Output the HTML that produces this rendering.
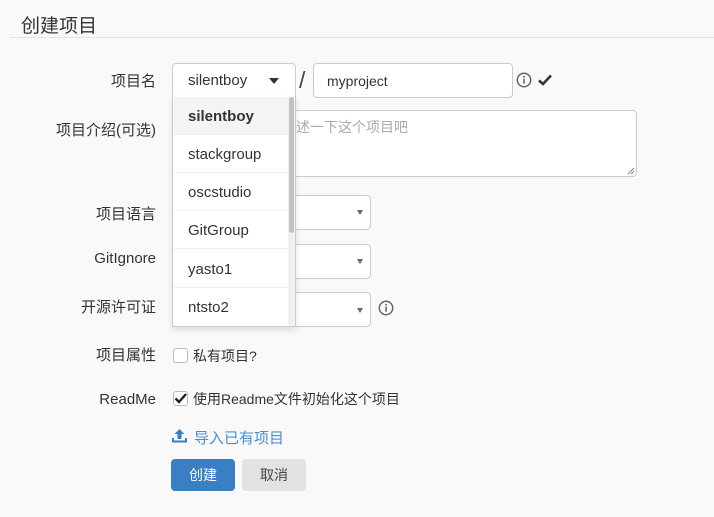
<!DOCTYPE html>
<html><head><meta charset="utf-8"><style>
body{margin:0;width:714px;height:517px;background:#f9f9f9;font-family:"Liberation Sans","Noto Sans CJK SC",sans-serif;color:#333;position:relative;overflow:hidden}
.a{position:absolute}
.lbl{position:absolute;right:558px;font-size:15px;color:#333;white-space:nowrap;line-height:20px}
.box{position:absolute;background:#fff;border:1px solid #ccc;border-radius:4px;box-sizing:border-box}
.arr{position:absolute;width:0;height:0;border-left:3px solid transparent;border-right:3px solid transparent;border-top:5px solid #666}
.item{position:absolute;left:0;width:115px;height:38px;line-height:40px;padding-left:15px;box-sizing:border-box;font-size:15px;color:#333;border-bottom:1px solid #eee}
</style></head><body>
<div class="a" style="left:21px;top:11px;font-size:19px;color:#333">创建项目</div>
<div class="a" style="left:10px;top:37px;width:704px;height:1px;background:#e2e2e2"></div>

<div class="lbl" style="top:72px">项目名</div>
<div class="box" style="left:172px;top:63px;width:124px;height:35px;border-radius:4px 4px 0 0"></div>
<div class="a" style="left:188px;top:72px;font-size:15px">silentboy</div>
<div class="arr" style="left:269px;top:78px;border-left-width:5px;border-right-width:5px;border-top-width:6px;border-top-color:#333"></div>
<div class="a" style="left:299px;top:67px;font-size:23px;color:#444">/</div>
<div class="box" style="left:313px;top:63px;width:200px;height:35px"></div>
<div class="a" style="left:327px;top:73px;font-size:14px">myproject</div>
<svg class="a" style="left:516px;top:72px" width="16" height="16" viewBox="0 0 15 15"><circle cx="7.5" cy="7.5" r="6.3" fill="none" stroke="#666" stroke-width="1.4"/><rect x="6.8" y="6.3" width="1.5" height="4.6" fill="#666"/><circle cx="7.5" cy="4.4" r="0.9" fill="#666"/></svg>
<svg class="a" style="left:538px;top:74px" width="14" height="12" viewBox="0 0 14 12"><path d="M1 6.5 L5 10 L13 1.5" fill="none" stroke="#333" stroke-width="2.6"/></svg>

<div class="lbl" style="top:121px">项目介绍(可选)</div>
<div class="box" style="left:270px;top:110px;width:367px;height:67px"></div>
<div class="a" style="left:296px;top:117px;font-size:14px;color:#aaa">述一下这个项目吧</div>
<svg class="a" style="left:627px;top:167px" width="8" height="8"><path d="M1 7L7 1M4 7L7 4" stroke="#888"/></svg>

<div class="lbl" style="top:205px">项目语言</div>
<div class="box" style="left:270px;top:195px;width:101px;height:35px"></div><div class="arr" style="left:357px;top:210px"></div>
<div class="lbl" style="top:249px">GitIgnore</div>
<div class="box" style="left:270px;top:244px;width:101px;height:35px"></div><div class="arr" style="left:357px;top:259px"></div>
<div class="lbl" style="top:298px">开源许可证</div>
<div class="box" style="left:270px;top:292px;width:101px;height:35px"></div><div class="arr" style="left:357px;top:308px"></div>
<svg class="a" style="left:378px;top:300px" width="16" height="16" viewBox="0 0 15 15"><circle cx="7.5" cy="7.5" r="6.3" fill="none" stroke="#666" stroke-width="1.4"/><rect x="6.8" y="6.3" width="1.5" height="4.6" fill="#666"/><circle cx="7.5" cy="4.4" r="0.9" fill="#666"/></svg>

<div class="a" style="left:172px;top:97px;width:124px;height:230px;background:#fff;border:1px solid #ccc;border-top:none;box-sizing:border-box;box-shadow:0 3px 6px rgba(0,0,0,.12);overflow:hidden">
<div class="item" style="top:0;background:#f4f4f4;font-weight:bold">silentboy</div>
<div class="item" style="top:38px">stackgroup</div>
<div class="item" style="top:76px">oscstudio</div>
<div class="item" style="top:114px">GitGroup</div>
<div class="item" style="top:153px">yasto1</div>
<div class="item" style="top:191px;border:none">ntsto2</div>
<div class="a" style="left:115px;top:0;width:7px;height:229px;background:#f1f1f1"></div>
<div class="a" style="left:116px;top:0;width:5px;height:136px;background:#c2c2c2;border-radius:3px"></div>
</div>

<div class="lbl" style="top:346px">项目属性</div>
<div class="a" style="left:173px;top:348px;width:13px;height:13px;border:1px solid #bbb;border-radius:3px;background:#fff"></div>
<div class="a" style="left:193px;top:346px;font-size:14px">私有项目?</div>
<div class="lbl" style="top:390px">ReadMe</div>
<div class="a" style="left:173px;top:391px;width:13px;height:13px;border:1px solid #bbb;border-radius:3px;background:#fff"></div>
<svg class="a" style="left:174px;top:392px" width="13" height="12"><path d="M1.5 6.5L5 10L12 2" fill="none" stroke="#222" stroke-width="2.4"/></svg>
<div class="a" style="left:193px;top:389px;font-size:14px">使用Readme文件初始化这个项目</div>

<svg class="a" style="left:172px;top:429px" width="15" height="14" viewBox="0 0 15 14"><path d="M7.5 0L2.5 5H5.5V10H9.5V5H12.5Z" fill="#3a7fc4"/><path d="M0 9V13.5H15V9H13V11.5H2V9Z" fill="#3a7fc4"/></svg>
<div class="a" style="left:194px;top:427px;font-size:15px;color:#4a8fd6">导入已有项目</div>

<div class="a" style="left:171px;top:459px;width:64px;height:32px;background:#3a7fc4;border-radius:4px;color:#fff;font-size:14px;text-align:center;line-height:32px">创建</div>
<div class="a" style="left:242px;top:459px;width:64px;height:32px;background:#e2e2e2;border-radius:4px;color:#444;font-size:14px;text-align:center;line-height:32px">取消</div>
</body></html>
